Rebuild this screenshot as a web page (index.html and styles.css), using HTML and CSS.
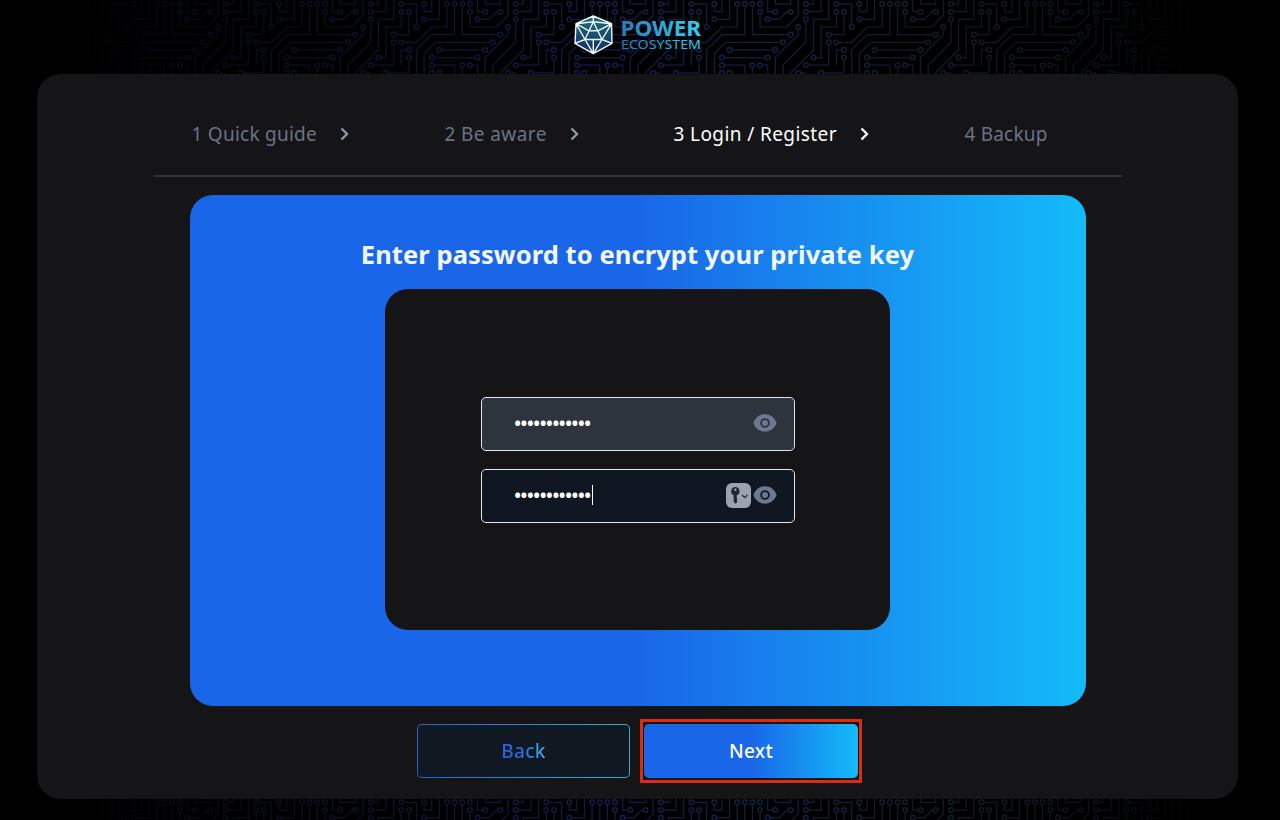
FILE: index.html
```html
<!DOCTYPE html>
<html lang="en">
<head>
<meta charset="utf-8">
<title>Power Ecosystem</title>
<link rel="stylesheet" href="styles.css">
</head>
<body>
<svg class="circuit" width="1280" height="820" viewBox="0 0 1280 820" aria-hidden="true">
  <defs>
    <linearGradient id="trace" x1="0" x2="1">
      <stop offset=".06" stop-color="#0a0c20" stop-opacity="0"/>
      <stop offset=".14" stop-color="#0a0c1d" stop-opacity=".7"/>
      <stop offset=".32" stop-color="#0e122e"/>
      <stop offset=".47" stop-color="#121b49"/>
      <stop offset=".6" stop-color="#102140"/>
      <stop offset=".75" stop-color="#101a26"/>
      <stop offset=".86" stop-color="#0a1116"/>
      <stop offset=".94" stop-color="#080b0e" stop-opacity="0"/>
    </linearGradient>
    <g id="traces">
      <path d="M0 1H2V-1M0 0H1V-1M4 0H6V3M4 1V3H2V7H1M5 1V4H3M0 2V5L-3 8V10M3-1V2H1V6L-2 9V10M-1 3V4L-4 7V10M3 5V8H0M4 5H6L8 3H10V0M7 0V1H8V-1M7 2H9V-1M11 0V4H8L6 6V10M12 0V4H17M13 0V-1M13 1V3H16.5L18 1.5V-1M14 2H15.5L16.5 1H17M15 1H14V-1M15-1V0H17V-1M16 5H8.5L7 6.5V10M9 6H15M8 7H14M8 8H11V10M12 8V10M13 8H14V10M5 6H4V8M5 7V9H2M8 9V10M9 9V10M-1 9H0"/>
      <g class="pads">
        <circle r=".3"/><circle cy="1" r=".3"/><circle cy="2" r=".3"/><circle cx="4" r=".3"/><circle cx="4" cy="1" r=".3"/><circle cx="5" cy="1" r=".3"/><circle cx="6" cy="3" r=".3"/><circle cx="1" cy="7" r=".3"/><circle cx="3" cy="4" r=".3"/><circle cx="-1" cy="3" r=".3"/><circle cx="3" cy="5" r=".3"/><circle cx="4" cy="5" r=".3"/><circle cy="8" r=".3"/><circle cx="7" r=".3"/><circle cx="7" cy="2" r=".3"/><circle cx="10" r=".3"/><circle cx="11" r=".3"/><circle cx="12" r=".3"/><circle cx="13" r=".3"/><circle cx="13" cy="1" r=".3"/><circle cx="15" cy="1" r=".3"/><circle cx="17" cy="1" r=".3"/><circle cx="14" cy="2" r=".3"/><circle cx="17" cy="4" r=".3"/><circle cx="16" cy="5" r=".3"/><circle cx="9" cy="6" r=".3"/><circle cx="15" cy="6" r=".3"/><circle cx="8" cy="7" r=".3"/><circle cx="14" cy="7" r=".3"/><circle cx="8" cy="8" r=".3"/><circle cx="12" cy="8" r=".3"/><circle cx="13" cy="8" r=".3"/><circle cx="5" cy="6" r=".3"/><circle cx="5" cy="7" r=".3"/><circle cx="8" cy="9" r=".3"/><circle cx="9" cy="9" r=".3"/><circle cx="2" cy="9" r=".3"/><circle cx="-1" cy="9" r=".3"/>
      </g>
    </g>
    <g id="row">
      <use href="#traces"/><use href="#traces" x="19"/><use href="#traces" x="38"/><use href="#traces" x="57"/><use href="#traces" x="76"/><use href="#traces" x="95"/><use href="#traces" x="114"/><use href="#traces" x="133"/><use href="#traces" x="152"/>
    </g>
    <mask id="board" maskUnits="userSpaceOnUse" x="0" y="0" width="1280" height="820">
      <g class="lines">
        <use href="#row" transform="translate(-64.5 4.1) scale(7.635)"/>
        <use href="#row" transform="translate(-64.5 802.4) scale(7.635)"/>
      </g>
    </mask>
  </defs>
  <rect width="1280" height="820" fill="url(#trace)" mask="url(#board)"/>
</svg>

<div class="page">
  <header class="header">
    <svg class="logo" width="130" height="44" viewBox="573 12 130 44" role="img" aria-label="Power Ecosystem">
      <defs>
        <linearGradient id="gem" x1="0" y1="0" x2="0" y2="1"><stop stop-color="#216f7b"/><stop offset="1" stop-color="#102b61"/></linearGradient>
        <linearGradient id="word" gradientUnits="userSpaceOnUse" x1="621" x2="701" y1="30" y2="24"><stop stop-color="#247bb6"/><stop offset=".4" stop-color="#2c9fd2"/><stop offset="1" stop-color="#35d0ee"/></linearGradient>
      </defs>
      <path fill="url(#gem)" d="M593.3 15.8 612 23.6V43.2L593.3 53.8 575 43.2 576 23.6Z"/>
      <path class="gem-lines" d="M593.3 16 611.6 23.7 612 43.3 593.3 53.6 575 43.3 576 23.7ZM576 23.7 593.3 21.8 611.6 23.7M593.3 16V21.8M593.3 21.8 585 39.5H602L593.3 21.8M576 23.7 585 39.5 575 43.3M611.6 23.7 602 39.5 612 43.3M585 39.5 593.3 53.6 602 39.5M593.3 40V53M576 23.7 589 30.8H598L611.6 23.7"/>
      <text class="word-main" x="620.5" y="35.7" textLength="80.5" lengthAdjust="spacingAndGlyphs">POWER</text>
      <text class="word-sub" x="621" y="49" textLength="80" lengthAdjust="spacingAndGlyphs">ECOSYSTEM</text>
    </svg>
  </header>

  <main class="card">
    <nav class="steps">
      <div class="step s1"><span>1 Quick guide</span><svg width="9" height="14" viewBox="0 0 9 14"><path d="M1.5 1.5 7 7 1.5 12.5"/></svg></div>
      <div class="step s2"><span>2 Be aware</span><svg width="9" height="14" viewBox="0 0 9 14"><path d="M1.5 1.5 7 7 1.5 12.5"/></svg></div>
      <div class="step s3 active"><span>3 Login / Register</span><svg width="9" height="14" viewBox="0 0 9 14"><path d="M1.5 1.5 7 7 1.5 12.5"/></svg></div>
      <div class="step s4"><span>4 Backup</span></div>
    </nav>

    <section class="panel">
      <h1 class="title"><span>Enter password to encrypt your private key</span></h1>
      <div class="form">
        <div class="field filled">
          <span class="dots">••••••••••••</span>
          <svg class="eye" width="24" height="18" viewBox="0 0 24 18"><path fill-rule="evenodd" d="M12 .3C6.6 .3 2.3 3.7.4 9 2.3 14.3 6.6 17.7 12 17.7S21.7 14.3 23.6 9C21.7 3.7 17.4.3 12 .3ZM12 4.2A4.8 4.8 0 1 1 12 13.8 4.8 4.8 0 0 1 12 4.2Z"/><circle cx="12" cy="9" r="3"/></svg>
        </div>
        <div class="field">
          <span class="dots">••••••••••••</span><span class="caret"></span>
          <span class="keychip"><svg width="25" height="25" viewBox="0 0 25 25"><path fill-rule="evenodd" d="M9.3 4A4.3 4.3 0 0 0 7.6 12.2V18.8L9.6 20.8 11.6 18.8 10.5 17.6 11.6 16.4 10.8 15.2V12.3A4.3 4.3 0 0 0 9.3 4ZM9.4 5.4A1.2 1.2 0 1 1 9.3 7.9 1.2 1.2 0 0 1 9.4 5.4Z"/><path class="chev" d="M16 12 18.8 14.6 21.6 12"/></svg></span>
          <svg class="eye" width="24" height="18" viewBox="0 0 24 18"><path fill-rule="evenodd" d="M12 .3C6.6 .3 2.3 3.7.4 9 2.3 14.3 6.6 17.7 12 17.7S21.7 14.3 23.6 9C21.7 3.7 17.4.3 12 .3ZM12 4.2A4.8 4.8 0 1 1 12 13.8 4.8 4.8 0 0 1 12 4.2Z"/><circle cx="12" cy="9" r="3"/></svg>
        </div>
      </div>
    </section>

    <div class="actions">
      <button class="btn back"><span>Back</span></button>
      <div class="highlight"><button class="btn next"><span>Next</span></button></div>
    </div>
  </main>
</div>
</body>
</html>
```
FILE: styles.css
```css
* { box-sizing: border-box; }
body {
  margin: 0;
  height: 820px;
  overflow: hidden;
  background: #000;
  color: #fff;
  font-family: "Noto Sans", "Open Sans", sans-serif;
}
.circuit { position: absolute; inset: 0; }
.lines { fill: none; stroke: #fff; stroke-width: .16; }
.pads { fill: #000; stroke-width: .2; }
.page { position: relative; padding: 0 42px 0 37px; }
.header { height: 74px; padding: 12px 0 0 536px; }
.logo { display: block; }
.gem-lines { fill: none; stroke: #eef7fa; stroke-width: 1.4; stroke-linejoin: round; }
.word-main { font-size: 21px; font-weight: 700; fill: url(#word); }
.word-sub { font-size: 13.3px; font-weight: 400; fill: url(#word); }
.card {
  display: flex;
  flex-direction: column;
  align-items: center;
  height: 725px;
  border-radius: 24px;
  background: #151517;
}
.steps {
  display: flex;
  width: 968px;
  height: 103px;
  padding: 17px 0 0 38px;
  border-bottom: 2px solid #30313d;
}
.step {
  display: flex;
  align-items: center;
  height: 86px;
  color: #6b7388;
  font-size: 19px;
  line-height: 28px;
  white-space: nowrap;
}
.step span { letter-spacing: .4px; }
.step svg { fill: none; stroke: #9298ab; stroke-width: 2.3; }
.s1 { width: 253px; }
.s1 span { width: 148px; letter-spacing: .25px; }
.s2 { width: 229px; }
.s2 span { width: 125px; }
.s3 { width: 291px; }
.s3 span { width: 186px; }
.s4 span { letter-spacing: .2px; }
.active { color: #fff; }
.active svg { stroke: #fff; }
.panel {
  width: 896px;
  height: 511px;
  margin-top: 18px;
  padding-top: 39px;
  border-radius: 23px;
  background: linear-gradient(90deg, #1967e8 0%, #1967e8 50%, #14bbf9 100%);
}
.title {
  margin: 0;
  height: 55px;
  color: #f3f7ff;
  font-size: 25.5px;
  font-weight: 700;
  line-height: 40px;
  letter-spacing: .08px;
  text-align: center;
  white-space: nowrap;
}
.form {
  display: flex;
  flex-direction: column;
  align-items: center;
  justify-content: center;
  gap: 18px;
  width: 505px;
  height: 341px;
  margin: 0 auto;
  border-radius: 23px;
  background: #151517;
}
.field {
  display: flex;
  align-items: center;
  width: 314px;
  height: 54px;
  padding: 0 17px 0 32px;
  border: 1px solid #e4e6ea;
  border-radius: 5px;
  background: #101722;
}
.filled { background: #2d343d; }
.dots { padding-bottom: 3px; font-size: 22px; line-height: 30px; letter-spacing: -1.9px; }
.caret { width: 1px; height: 20px; margin: 0 0 1px 2px; background: #fff; }
.eye { margin: 0 0 2px auto; fill: #6c7890; }
.keychip { margin-left: auto; height: 25px; border-radius: 6px; background: #9ca3b0; }
.keychip svg { display: block; fill: #22262e; }
.keychip .chev { fill: none; stroke: #353a44; stroke-width: 1.5; }
.keychip + .eye { margin-left: 2px; }
.actions {
  display: flex;
  align-items: center;
  gap: 10px;
  margin-top: 13px;
  margin-left: 4px;
}
.btn {
  display: flex;
  align-items: center;
  justify-content: center;
  width: 213px;
  height: 54px;
  padding: 0;
  border: 0;
  border-radius: 5px;
  font-family: inherit;
  font-size: 19px;
  font-weight: 500;
  letter-spacing: .3px;
}
.back {
  border: 1px solid transparent;
  background:
    linear-gradient(#101821, #101821) padding-box,
    linear-gradient(90deg, #2663c5, #3fa7cb) border-box;
}
.back span {
  background: linear-gradient(90deg, #2863e5 15%, #2877dc 60%, #40b6ed);
  -webkit-background-clip: text;
  background-clip: text;
  color: transparent;
}
.highlight { width: 222px; height: 64px; padding: 2px 1px; border: 3px solid #dc2d12; }
.next {
  width: 214px;
  background: linear-gradient(90deg, #1967e8 50%, #14bbf9);
  color: #fff;
}
```
